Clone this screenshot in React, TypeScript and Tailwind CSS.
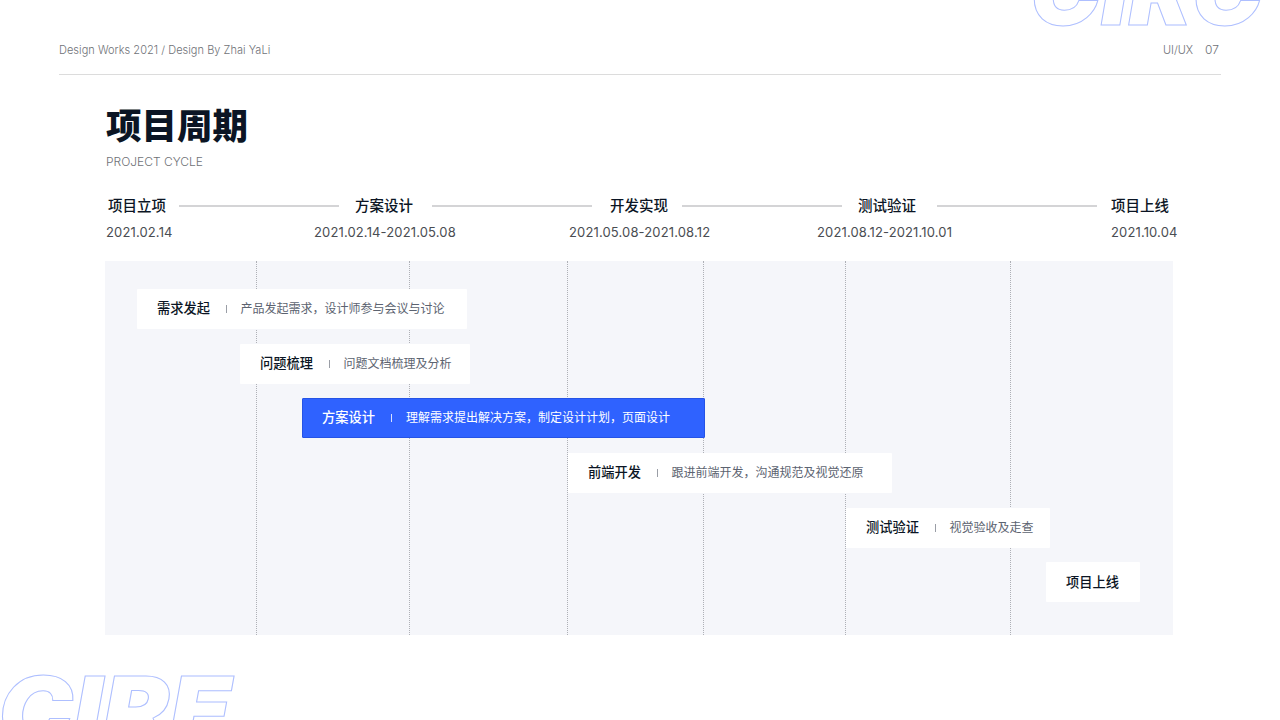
const CJK = { fontFamily: 'Inter, "Noto Sans CJK SC", sans-serif' };

const steps = [
  { name: "项目立项", date: "2021.02.14" },
  { name: "方案设计", date: "2021.02.14-2021.05.08" },
  { name: "开发实现", date: "2021.05.08-2021.08.12" },
  { name: "测试验证", date: "2021.08.12-2021.10.01" },
  { name: "项目上线", date: "2021.10.04" },
];

const guides = [151, 304, 462, 598, 740, 905];

function Bar({ title, desc, offset, width, active }: { title: string; desc?: string; offset: number; width: number; active?: boolean }) {
  return (
    <div
      style={{ marginLeft: offset, width }}
      className={`relative flex h-10 items-center rounded-[1px] ${active ? "border border-[#2553e6] bg-[#2f62ff] pl-[19.5px]" : "bg-white pl-5"}`}
    >
      <span className={`text-[13.25px] font-medium whitespace-nowrap ${active ? "text-white" : "text-[#0b1524]"}`}>{title}</span>
      {desc && (
        <>
          <span className={`ml-4 h-2 w-px ${active ? "mr-3.5 bg-white/80" : "mr-[13.5px] bg-[#9a9ea6]"}`} />
          <span className={`text-xs whitespace-nowrap ${active ? "text-white" : "text-[#5c6370]"}`}>{desc}</span>
        </>
      )}
    </div>
  );
}

export default function App() {
  return (
    <div style={CJK} className="relative h-[720px] w-[1280px] overflow-hidden bg-white">
      {/* 角落的描边字 */}
      <div className="absolute top-[-54px] left-[1030px] origin-left scale-x-[1.03] text-[92px] leading-none font-black text-transparent italic [-webkit-text-stroke:1px_#aebfff]">
        CIRC
      </div>
      <div className="absolute top-[664px] left-[-2px] origin-left scale-x-[1.09] text-[92px] leading-none font-black text-transparent italic [-webkit-text-stroke:1px_#aebfff]">
        CIRE
      </div>

      <header className="mx-[59px] flex h-[75px] items-end justify-between border-b border-[#dcdcdc] pb-[16px] text-[11px] font-light text-[#6f7277]">
        <span className="tracking-[0.03px]">Design Works 2021 / Design By Zhai YaLi</span>
        <span className="flex items-center gap-[12px] pr-0.5">
          <span>UI/UX</span>
          <span className="text-xs">07</span>
        </span>
      </header>

      <main className="pl-[105px]">
        <h1 className="mt-[30px] pl-px text-[35.5px] leading-[44px] font-black text-[#0b1524]">项目周期</h1>
        <p className="mt-[5px] pl-px text-xs leading-4 font-light text-[#6f7277]">PROJECT CYCLE</p>

        <div className="mt-[24px] flex h-6 items-center pl-[3px] text-[14.5px] font-medium text-[#0b1524]">
          <span className="w-[58px]">{steps[0].name}</span>
          <span className="mr-4 ml-[13px] h-0.5 w-40 bg-[#d4d4d6]" />
          <span className="w-[58px]">{steps[1].name}</span>
          <span className="mr-[18px] ml-[19px] h-0.5 w-40 bg-[#d4d4d6]" />
          <span className="w-[58px]">{steps[2].name}</span>
          <span className="mr-4 ml-3.5 h-0.5 w-40 bg-[#d4d4d6]" />
          <span className="w-[58px]">{steps[3].name}</span>
          <span className="mr-3.5 ml-[21px] h-0.5 w-40 bg-[#d4d4d6]" />
          <span className="w-[58px]">{steps[4].name}</span>
        </div>

        <div className="mt-[6px] flex h-[18px] items-center pl-px text-[13px] tracking-[0.14px] text-[#4a4d52]">
          <span className="w-[208px]">{steps[0].date}</span>
          <span className="w-[255px]">{steps[1].date}</span>
          <span className="w-[248px]">{steps[2].date}</span>
          <span className="w-[294px]">{steps[3].date}</span>
          <span>{steps[4].date}</span>
        </div>

        <section className="relative mt-[19px] flex h-[374px] w-[1068px] flex-col gap-[14.7px] bg-[#f5f6fa] pt-7">
          {guides.map((x) => (
            <span key={x} style={{ left: x }} className="absolute top-0 bottom-0 border-l border-dotted border-[#aeb0b6]" />
          ))}
          <Bar title="需求发起" desc="产品发起需求，设计师参与会议与讨论" offset={32} width={330} />
          <Bar title="问题梳理" desc="问题文档梳理及分析" offset={135} width={230} />
          <Bar title="方案设计" desc="理解需求提出解决方案，制定设计计划，页面设计" offset={196.5} width={403} active />
          <Bar title="前端开发" desc="跟进前端开发，沟通规范及视觉还原" offset={463} width={324} />
          <Bar title="测试验证" desc="视觉验收及走查" offset={741} width={204} />
          <Bar title="项目上线" offset={941} width={94} />
        </section>
      </main>
    </div>
  );
}
